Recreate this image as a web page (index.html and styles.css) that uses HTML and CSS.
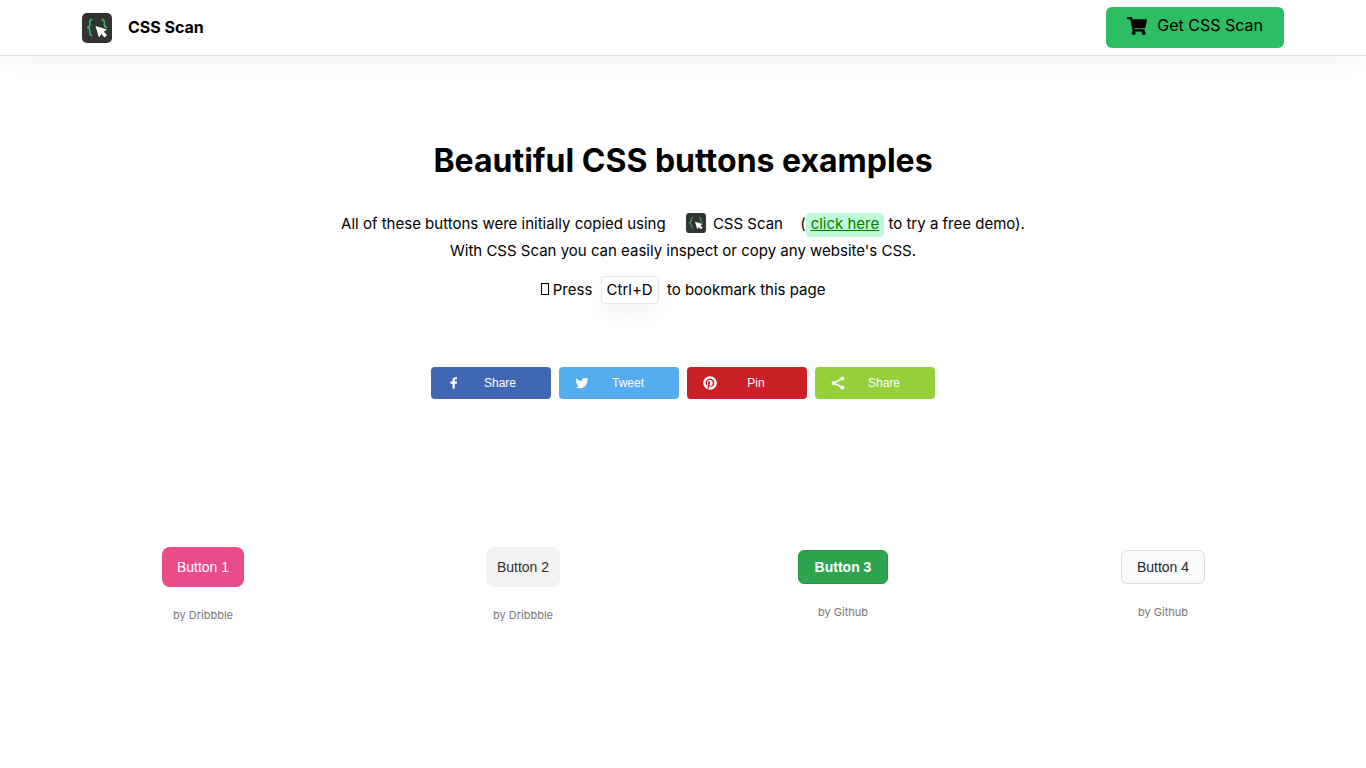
FILE: index.html
```html
<!DOCTYPE html>
<html lang="en">
<head>
<meta charset="utf-8">
<meta name="viewport" content="width=device-width, initial-scale=1">
<title>Beautiful CSS buttons examples</title>
<link rel="stylesheet" href="styles.css">
</head>
<body>
<svg class="defs" aria-hidden="true">
  <symbol id="logo" viewBox="0 0 30 30">
    <rect width="30" height="30" rx="5" fill="#333"/>
    <path d="M10.500 6.500H10Q7.800 6.500 7.800 9V12Q7.800 14.500 5 14.500Q7.800 14.500 7.800 17V20Q7.800 22.500 10 22.500H10.500M19.500 6.500H20Q22.300 6.500 22.300 9V12Q22.300 14.500 25 14.500" fill="none" stroke="#2dbd63" stroke-width="1.500"/>
    <path d="M13.500 13L25 16.500L21.800 18.700L25 22L22.600 24.400L19.200 21L17 24.500Z" fill="#fff"/>
  </symbol>
</svg>
<header class="header">
  <a class="brand" href="#"><svg class="brand-logo" aria-hidden="true"><use href="#logo"/></svg>CSS Scan</a>
  <a class="cta" href="#"><svg class="cart" viewBox="0 0 576 512" aria-hidden="true"><path d="M528.120 301.319l47.273-208C578.806 78.301 567.391 64 551.990 64H159.208l-9.166-44.810C147.758 8.021 137.930 0 126.529 0H24C10.745 0 0 10.745 0 24v16c0 13.255 10.745 24 24 24h69.883l70.248 343.435C147.325 417.100 136 435.222 136 456c0 30.928 25.072 56 56 56s56-25.072 56-56c0-15.674-6.447-29.835-16.824-40h209.647C430.447 426.165 424 440.326 424 456c0 30.928 25.072 56 56 56s56-25.072 56-56c0-22.172-12.888-41.332-31.579-50.405l5.517-24.276c3.413-15.018-8.002-29.319-23.403-29.319H218.117l-6.545-32h293.145c11.206 0 20.920-7.754 23.403-18.681z"/></svg>Get CSS Scan</a>
</header>
<main>
  <section class="intro">
    <h1 class="title">Beautiful CSS buttons examples</h1>
    <p class="text">All of these buttons were initially copied using <span class="scan"><svg class="scan-logo" aria-hidden="true"><use href="#logo"/></svg>CSS Scan</span> (<a class="demo" href="#">click here</a> to try a free demo).<br>With CSS Scan you can easily inspect or copy any website's CSS.</p>
    <p class="bookmark"><span class="glyph"></span> Press <kbd class="key">Ctrl+D</kbd> to bookmark this page</p>
  </section>
  <div class="shares">
    <button class="share facebook"><svg class="share-icon" viewBox="4 4 32 32" aria-hidden="true"><path d="M21.700 16.700h5v5h-5v11.600h-5V21.700h-5v-5h5v-2.100c0-2 .6-4.500 1.800-5.900 1.300-1.300 2.800-2 4.700-2h3.500v5h-3.500c-.9 0-1.500.6-1.500 1.500v3.500z"/></svg><span class="share-label">Share</span></button>
    <button class="share twitter"><svg class="share-icon" viewBox="4 4 32 32" aria-hidden="true"><path d="M31.500 11.700c1.300-.8 2.200-2 2.700-3.400-1.400.7-2.700 1.200-4 1.400-1.100-1.200-2.600-1.900-4.400-1.900-1.700 0-3.200.6-4.400 1.800-1.200 1.200-1.800 2.700-1.800 4.400 0 .5.100.9.200 1.300-5.100-.1-9.400-2.300-12.700-6.400-.6 1-.9 2.100-.9 3.100 0 2.200 1 3.900 2.800 5.200-1.100-.1-2-.4-2.800-.8 0 1.500.5 2.800 1.400 4 .9 1.100 2.100 1.800 3.500 2.100-.5.100-1 .2-1.600.2-.5 0-.9 0-1.100-.1.400 1.200 1.100 2.300 2.100 3 1.100.8 2.300 1.200 3.600 1.300-2.200 1.700-4.700 2.600-7.600 2.600-.7 0-1.200 0-1.500-.1 2.800 1.900 6 2.800 9.500 2.800 3.500 0 6.700-.9 9.400-2.700 2.800-1.800 4.800-4.100 6.100-6.700 1.300-2.600 1.900-5.300 1.900-8.100v-.8c1.300-.9 2.300-2 3.100-3.200-1.100.5-2.300.8-3.500 1z"/></svg><span class="share-label">Tweet</span></button>
    <button class="share pinterest"><svg class="share-icon" viewBox="0 0 496 512" aria-hidden="true"><path d="M496 256c0 137-111 248-248 248-25.600 0-50.200-3.900-73.400-11.100 10.100-16.500 25.200-43.500 30.800-65 3-11.600 15.400-59 15.400-59 8.100 15.400 31.700 28.500 56.800 28.500 74.800 0 128.700-68.800 128.700-154.300 0-81.900-66.900-143.200-152.900-143.200-107 0-163.900 71.800-163.900 150.100 0 36.400 19.400 81.700 50.300 96.100 4.700 2.200 7.200 1.200 8.300-3.300.8-3.400 5-20.300 6.900-28.100.6-2.500.3-4.700-1.700-7.100-10.100-12.500-18.300-35.300-18.300-56.600 0-54.700 41.400-107.600 112-107.600 60.900 0 103.600 41.500 103.600 100.900 0 67.100-33.900 113.600-78 113.600-24.300 0-42.600-20.100-36.700-44.800 7-29.500 20.500-61.300 20.500-82.600 0-19-10.200-34.900-31.400-34.900-24.900 0-44.900 25.700-44.900 60.200 0 22 7.400 36.800 7.400 36.800s-24.500 103.800-29 123.200c-5 21.400-3 51.600-.9 71.200C65.400 450.900 0 361.100 0 256 0 119 111 8 248 8s248 111 248 248z"/></svg><span class="share-label">Pin</span></button>
    <button class="share sharethis"><svg class="share-icon" viewBox="0 0 14 14" aria-hidden="true"><path d="M11.500 2.500L2.500 7L11.500 11.500" fill="none" stroke="#fff" stroke-width="1.500"/><circle cx="11.300" cy="2.500" r="2"/><circle cx="2.600" cy="7" r="2"/><circle cx="11.300" cy="11.500" r="2"/></svg><span class="share-label">Share</span></button>
  </div>
  <section class="examples">
    <div class="example"><button class="btn pink">Button 1</button><p class="credit">by Dribbble</p></div>
    <div class="example"><button class="btn gray">Button 2</button><p class="credit">by Dribbble</p></div>
    <div class="example"><button class="btn green">Button 3</button><p class="credit">by Github</p></div>
    <div class="example"><button class="btn light">Button 4</button><p class="credit">by Github</p></div>
  </section>
</main>
</body>
</html>
```
FILE: styles.css
```css
* { box-sizing: border-box; }
body {
  margin: 0;
  background: #fff;
  color: #000;
  font: 15px/27px Inter, sans-serif;
}
a { color: inherit; text-decoration: none; }
.defs { display: none; }
.header {
  display: flex;
  align-items: center;
  justify-content: space-between;
  height: 56px;
  padding: 0 6%;
  border-bottom: 1px solid #e2e2e2;
  box-shadow: 0 8px 24px rgba(0, 0, 0, .04);
}
.brand { display: flex; align-items: center; gap: 16px; font-size: 16px; font-weight: 700; }
.brand-logo { width: 30px; height: 30px; }
.cta {
  display: flex;
  align-items: center;
  gap: 10px;
  padding: 5px 21px 9px;
  border-radius: 6px;
  background: #2dbd63;
  font-size: 16px;
}
.cart { width: 20px; height: 18px; }
.intro { padding: 84px 16px 0; text-align: center; }
.title { margin: 0 0 28px; font-size: 32px; line-height: 42px; font-weight: 700; }
.text { margin: 0; }
.scan { margin: 0 13px 0 16px; }
.scan-logo { width: 20px; height: 20px; margin-right: 7px; vertical-align: -4px; }
.demo {
  padding: 1px 5px 4px;
  border-radius: 4px;
  background: #bffad8;
  color: green;
  text-decoration: underline;
}
.bookmark { margin: 12px 0 0; }
.glyph { display: inline-block; width: 8px; height: 12px; border: 1px solid #000; }
.key {
  display: inline-block;
  margin: 0 4px;
  padding: 0 5px;
  border: 1px solid #e6e6e6;
  border-radius: 4px;
  background: #fff;
  box-shadow: 0 8px 24px rgba(0, 0, 0, .05);
  font: inherit;
  line-height: 26px;
}
.shares { display: flex; justify-content: center; gap: 8px; margin-top: 63px; }
.share {
  display: flex;
  align-items: center;
  width: 120px;
  height: 32px;
  padding: 0 16px;
  border: 0;
  border-radius: 4px;
  color: #fff;
  font: 12px/32px "Liberation Sans", Arial, sans-serif;
}
.share-icon { width: 14px; height: 14px; fill: #fff; }
.share-label { flex: 1; padding-left: 4px; text-align: center; }
.facebook { background: #4267b2; }
.twitter { background: #55acee; }
.pinterest { background: #cb2027; }
.sharethis { background: #95d03a; }
.examples {
  display: grid;
  grid-template-columns: repeat(4, 1fr);
  align-items: center;
  max-width: 1280px;
  margin: 148px auto 0;
}
.example { display: flex; flex-direction: column; align-items: center; gap: 18px; }
.btn {
  padding: 0 15px;
  border: 1px solid transparent;
  border-radius: 6px;
  font: 14px/20px "Liberation Sans", Arial, sans-serif;
}
.pink, .gray { height: 40px; border: 0; border-radius: 8px; }
.pink { background: #ea4c89; color: #fff; }
.gray { padding: 0 11px; background: #f3f3f4; color: #333; }
.green, .light { height: 34px; }
.green { padding: 0 16px; border-color: #2a9147; background: #2ea44f; color: #fff; font-weight: 700; }
.light { border-color: #d9dbdd; background: #fafbfc; color: #24292e; }
.credit { margin: 0; color: #777; font-size: 11px; line-height: 20px; }
```
